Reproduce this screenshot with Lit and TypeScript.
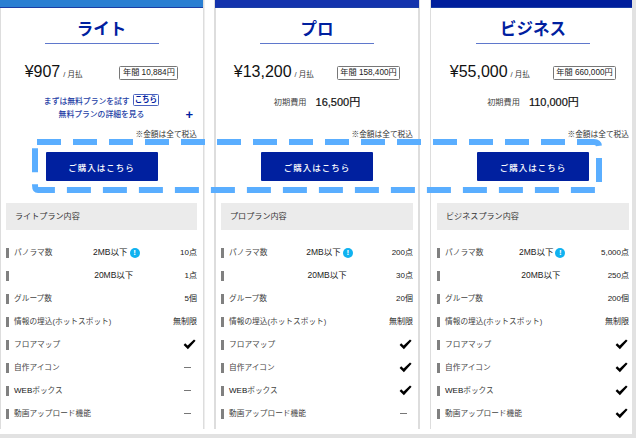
import { LitElement, html, css, svg } from "lit";
import { customElement } from "lit/decorators.js";

type Val = string;
interface Plan {
  name: string; bar: string; price: string; annual: string; fee?: string; values: Val[];
  priceGap: number;
}
const plans: Plan[] = [
  { name: "ライト", bar: "#2a7fd2", price: "¥907", annual: "年間 10,884円", priceGap: 37,
    values: ["10点", "1点", "5個", "無制限", "check", "dash", "dash", "dash"] },
  { name: "プロ", bar: "#1433ad", price: "¥13,200", annual: "年間 158,400円", fee: "16,500円", priceGap: 23,
    values: ["200点", "30点", "20個", "無制限", "check", "check", "check", "dash"] },
  { name: "ビジネス", bar: "#001e9c", price: "¥55,000", annual: "年間 660,000円", fee: "110,000円", priceGap: 23,
    values: ["5,000点", "250点", "200個", "無制限", "check", "check", "check", "check"] },
];
const labels = [
  html`パノラマ数`, html``, html`グループ数`, html`情報の埋込(ホットスポット)`, html`フロアマップ`,
  html`自作アイコン`, html`<span class="latin">WEB</span>ボックス`, html`動画アップロード機能`,
];

const check = svg`<svg class="check" width="13" height="11" viewBox="0 0 13 11"><path d="M0.6 5.9 L2.2 4.3 L4.6 6.4 L11 0.4 L12.6 1.8 L4.9 10.2 Z" fill="#000"/></svg>`;

@customElement("app-root")
export class AppRoot extends LitElement {
  static styles = css`
    :host { display: block; width: 638px; height: 440px; position: relative; overflow: hidden; background: #fff;
      font-family: "Liberation Sans", "Noto Sans CJK JP", sans-serif; color: #222; }
    .frame { width: 636px; height: 438px; box-sizing: border-box; overflow: hidden; display: grid; align-content: start;
      grid-template-columns: 203px 204px 204px; column-gap: 12px;
      border-right: 4px solid #e2e2e2; border-bottom: 4px solid #e2e2e2; }
    .col { height: 429px; display: flex; flex-direction: column; }
    .col:nth-child(1) { box-shadow: inset 1px 0 #ddd, 1.5px 0 #ddd; }
    .col:nth-child(2) { box-shadow: -1px 0 #ddd, inset 1px 0 #ddd, 1px 0 #ddd, inset -1px 0 #ddd; }
    .col:nth-child(3) { box-shadow: -1px 0 #ddd; }
    .bar { height: 8px; box-sizing: border-box; border-bottom: 1px solid #1b3ea5; flex: none; }
    .title { font-size: 16.5px; font-weight: 700; color: #00209f; text-align: center; height: 35px; line-height: 42px; width: 114px; margin: 0 auto; border-bottom: 1px solid #5f78cc; flex: none; }
    .price-row { display: flex; align-items: center; justify-content: center; height: 14px; margin-top: 22px; flex: none; }
    .price { font-size: 16px; line-height: 14px; color: #111; margin-top: -3px; }
    .mo { font-size: 7.5px; color: #333; margin-left: 3px; margin-top: 1px; white-space: nowrap; }
    .annual { font-size: 8.2px; border: 1px solid #777; border-radius: 1.5px; height: 14px; box-sizing: border-box; line-height: 12px; padding: 0 2.5px; color: #222; white-space: nowrap; }
    .info { flex: none; height: 50px; box-sizing: border-box; padding-top: 14px; position: relative; text-align: center; }
    .free { font-size: 7.8px; font-weight: 500; color: #2440a5; }
    .free-1 { height: 12px; display: flex; align-items: center; justify-content: center; gap: 3px; }
    .free-1 b { border: 1px solid #4a63c0; border-radius: 1.5px; height: 12px; box-sizing: border-box; line-height: 10px; padding: 0 1px; font-weight: 700; font-size: 7.5px; color: #00209f; }
    .free-2 { height: 12px; line-height: 12px; margin-top: 3px; }
    .plus { position: absolute; right: 10px; top: 28px; font-size: 13px; line-height: 13px; font-weight: 700; color: #00209f; }
    .fee { display: flex; align-items: center; justify-content: center; gap: 9px; font-size: 8.2px; color: #444; height: 14px; }
    .fee b { font-size: 11px; font-weight: 400; color: #111; -webkit-text-stroke: .2px #111; }
    .tax { flex: none; font-size: 7.7px; text-align: right; height: 11px; line-height: 9px; padding-right: 6px; color: #333; }
    .buy-wrap { flex: none; padding: 11px 0 22px; display: flex; justify-content: center; }
    .buy { width: 112px; height: 29px; background: #00209f; color: #fff; font-size: 8.5px; font-weight: 500; letter-spacing: 1px; display: flex; align-items: center; justify-content: center; border-radius: 1px; }
    .head { flex: none; height: 27px; margin: 0 6px; background: #ebebeb; font-size: 8.1px; line-height: 28px; padding-left: 9px; color: #333; }
    .rows { margin: 11px 6px 0; }
    .row { display: flex; justify-content: space-between; align-items: center; height: 23px; font-size: 8px; color: #333; white-space: nowrap; }
    .label { border-left: 3px solid #808080; padding-left: 5px; height: 10px; line-height: 10px; font-size: 7.7px; color: #444; box-sizing: content-box; }
    .label.empty { padding-left: 34px; }
    .latin { font-size: 8px; color: #111; }
    .mid { font-size: 8.5px; line-height: 9px; height: 10px; color: #222; display: flex; align-items: center; gap: 2px; }
    .val { text-align: right; color: #222; margin-left: auto; line-height: 9px; height: 10px; display: flex; align-items: center; }
    .mid + .val { margin-left: 0; }
    .dash { display: block; width: 7px; height: 1px; background: #777; margin-right: 6px; }
    .check { display: block; margin-right: 1.5px; }
    .i { width: 10px; height: 10px; border-radius: 50%; background: #10b2f0; color: #fff; font-size: 8px; line-height: 10px; font-weight: 700; text-align: center; }
    .overlay { position: absolute; left: 0; top: 0; pointer-events: none; }
  `;

  private val(v: Val) {
    if (v === "check") return check;
    if (v === "dash") return html`<span class="dash"></span>`;
    return v;
  }

  render() {
    return html`
      <div class="frame">
        ${plans.map((p) => html`
          <section class="col">
            <div class="bar" style="background:${p.bar}"></div>
            <div class="title">${p.name}</div>
            <div class="price-row">
              <span class="price">${p.price}</span><span class="mo">/ 月払</span>
              <span class="annual" style="margin-left:${p.priceGap}px">${p.annual}</span>
            </div>
            ${p.fee
              ? html`<div class="info"><div class="fee"><span>初期費用</span><b>${p.fee}</b></div></div>`
              : html`<div class="info free">
                  <div class="free-1">まずは無料プランを試す<b>こちら</b></div>
                  <div class="free-2">無料プランの詳細を見る</div>
                  <span class="plus">+</span>
                </div>`}
            <div class="tax">※金額は全て税込</div>
            <div class="buy-wrap"><div class="buy">ご購入はこちら</div></div>
            <div class="head">${p.name}プラン内容</div>
            <div class="rows">
              ${labels.map((l, i) => html`
                <div class="row">
                  <span class="label ${i === 1 ? "empty" : ""}">${l}</span>
                  ${i === 0 ? html`<span class="mid">2MB以下<span class="i">!</span></span>` : i === 1 ? html`<span class="mid">20MB以下</span>` : ""}
                  <span class="val">${this.val(p.values[i])}</span>
                </div>`)}
            </div>
          </section>`)}
      </div>
      <svg class="overlay" width="638" height="440">
        <path d="M37 142 H594 Q599 142 599 147 V190 H38 Q35 190 35 185 V142 Z" fill="none" stroke="#5aaeff" stroke-width="6" stroke-dasharray="24 12"/>
      </svg>
    `;
  }
}
